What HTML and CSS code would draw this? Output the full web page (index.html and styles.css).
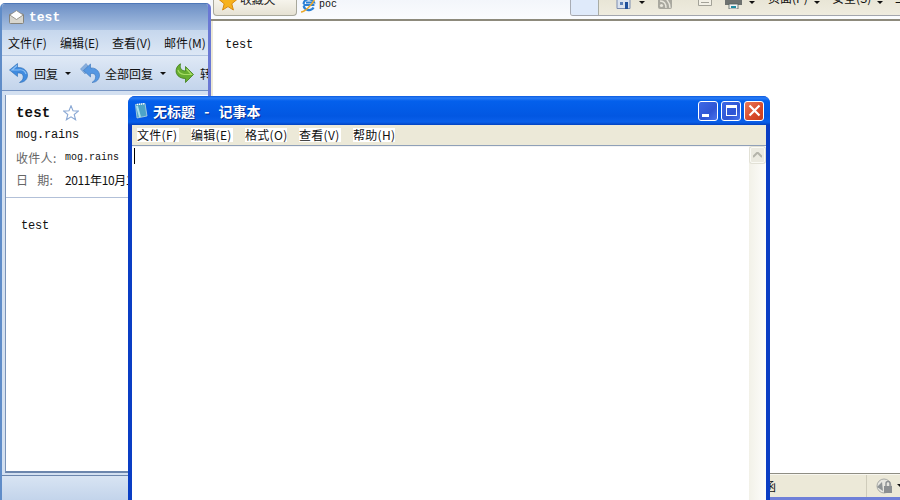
FILE: index.html
```html
<!DOCTYPE html>
<html lang="zh-CN">
<head>
    <meta charset="UTF-8">
    <title>无标题 - 记事本</title>
    <link rel="stylesheet" href="styles.css">
</head>
<body>
    <div class="desktop">
        <!-- 浏览器窗口 -->
        <div class="window browser">
            <div class="browser-top">
                <div class="tab-strip">
                    <div class="fav-tab">
                        <svg class="fav-star" width="18" height="11" viewBox="0 0 18 11"><path d="M9 -7 L11.4 -.6 L17.6 -.2 L12.8 3.8 L14.4 10 L9 6.6 L3.6 10 L5.2 3.8 L.4 -.2 L6.6 -.6 Z" fill="#f7b21c" stroke="#d98a10" stroke-width="1"/></svg>
                        <span>收藏夹</span>
                    </div>
                    <div class="page-tab">
                        <svg width="17" height="14" viewBox="0 0 17 14"><path d="M3.5 4 A5.5 5.5 0 0 1 14 2.5 H6 M3.4 5 H14.4 M13.6 7.5 A5.5 5.5 0 0 1 3.6 6" fill="none" stroke="#2a80d6" stroke-width="2.2"/><path d="M1 12 C4 12 12 6 15 -2" fill="none" stroke="#eaa92c" stroke-width="1.6"/></svg>
                        <span>poc</span>
                    </div>
                </div>
                <div class="command-bar">
                    <div class="new-tab"></div>
                    <div class="commands">
                        <svg class="cmd-icon" width="15" height="9" viewBox="0 0 15 9"><path d="M1 -2 H14 V8.5 H1 Z" fill="#dbe3ef" stroke="#7d8db0"/><path d="M9 2 H12 V9 H9 Z" fill="#20509c"/><path d="M4 2 H7 V5 H4 Z" fill="#5b7fb8"/></svg>
                        <i class="arrow arrow-home"></i>
                        <svg class="cmd-icon rss" width="14" height="9" viewBox="0 0 14 9"><rect x="0" y="-5" width="14" height="14" rx="2" fill="#a9a89f"/><circle cx="3.5" cy="5.5" r="1.6" fill="#e8e6dc"/><path d="M2 1 C6 1 8 3 8 8 M2 -3 C8 -3 12 2 12 8" fill="none" stroke="#e8e6dc" stroke-width="1.4"/></svg>
                        <svg class="cmd-icon page" width="14" height="6" viewBox="0 0 14 6"><path d="M.5 -2 H13.5 V5.5 H.5 Z" fill="#f2f0e6" stroke="#a3a298"/><path d="M3 2.5 H11" stroke="#a3a298"/></svg>
                        <svg class="cmd-icon print" width="17" height="9" viewBox="0 0 17 9"><rect x="0" y="-3" width="17" height="8" fill="#6e7270"/><rect x="4" y="4" width="9" height="5" fill="#f4f4f4" stroke="#55615f" stroke-width=".8"/><rect x="6" y="6" width="5" height="2" fill="#1f8aa0"/></svg>
                        <i class="arrow arrow-print"></i>
                        <span class="cmd-text">页面(P)</span>
                        <i class="arrow arrow-text"></i>
                        <span class="cmd-text safe">安全(S)</span>
                        <i class="arrow arrow-safe"></i>
                        <span class="cmd-text tool">工</span>
                    </div>
                </div>
            </div>
            <div class="browser-page">
                <p class="page-text">test</p>
            </div>
            <div class="status-bar">
                <span class="status-char">函</span>
                <div class="status-zone">
                    <svg width="18" height="17" viewBox="0 0 18 17"><circle cx="8" cy="8" r="7" fill="#e6e6e0" stroke="#a8aaa6"/><path d="M1 9 L6 4 L7 13 Z" fill="#8f9496"/><rect x="8" y="8" width="8" height="7" fill="#8b8f92"/><path d="M10 8 V5.5 A2 2 0 0 1 14 5.5 V8" fill="none" stroke="#8b8f92" stroke-width="1.4"/></svg>
                </div>
                <i class="arrow status-arrow"></i>
            </div>
        </div>

        <!-- 邮件窗口 -->
        <div class="window mail">
            <div class="mail-title">
                <svg width="15" height="14" viewBox="0 0 15 14"><rect x=".5" y="4" width="14" height="9.5" rx="1" fill="#d8d6ce" stroke="#85837b"/><path d="M.8 5 L7.5 .6 L14.2 5 L7.5 9.5 Z" fill="#fff" stroke="#85837b" stroke-width=".8"/></svg>
                <span>test</span>
            </div>
            <div class="mail-menu">
                <span>文件(F)</span>
                <span>编辑(E)</span>
                <span>查看(V)</span>
                <span>邮件(M)</span>
            </div>
            <div class="mail-tools">
                <svg class="tool-reply" width="19" height="20" viewBox="0 0 19 20"><path d="M8.5 .5 L.5 7 L8.5 13.5 V10 C12 9.6 14 11 14.2 13.5 C14.4 16 13 18 10.5 19.5 C16 19.5 18.8 15.5 18.5 11.5 C18 7 13.5 4 8.5 4.5 Z" fill="#3f8be0" stroke="#2c6cb4" stroke-width=".6"/><path d="M8 2.5 L3 7 H9 C13 6 16 8 17 11" fill="none" stroke="#8cc0f4" stroke-width="1.2"/></svg>
                <span class="tool-label">回复</span>
                <i class="arrow tool-arrow"></i>
                <svg class="tool-replyall" width="20" height="20" viewBox="0 0 20 20"><path d="M6 .5 L.5 6 L5 11 L6 9.5 L4 6.5 L8 3 Z" fill="#86aede" stroke="#6490c6" stroke-width=".6"/><path d="M10.5 1 L3.5 7.5 L10.5 14 V10.5 C13.5 10 15.5 11 15.6 13.5 C15.7 16 14.4 18 12 19.5 C17 19.5 19.8 15.5 19.5 11.5 C19 7.5 15 4.5 10.5 5 Z" fill="#5597e2" stroke="#3a75ba" stroke-width=".6"/></svg>
                <span class="tool-label label-all">全部回复</span>
                <i class="arrow tool-arrow"></i>
                <svg class="tool-forward" width="19" height="21" viewBox="0 0 19 21"><path d="M10.5 3.5 L18.5 11.5 L10.5 19.5 V15.5 C6.5 15.5 3 14 1.5 10.5 C.3 7 1.8 2.8 5.5 .8 C4.6 4.5 6 8 10.5 8 Z" fill="#67ad30" stroke="#3f7e1b" stroke-width=".8"/><path d="M11.5 6 L16.5 11.5 H9 C6 11 3.5 9 3 7" fill="none" stroke="#a6dc62" stroke-width="1.2"/></svg>
                <span class="tool-label">转发</span>
            </div>
            <div class="mail-body">
                <div class="mail-head">
                    <div class="subject">
                        <b>test</b>
                        <svg width="16" height="16" viewBox="0 0 16 16"><path d="M8 .8 L10 5.8 L15.4 6.1 L11.2 9.5 L12.6 14.8 L8 11.9 L3.4 14.8 L4.8 9.5 L.6 6.1 L6 5.8 Z" fill="#fff" stroke="#8aa8d4" stroke-width="1.1"/></svg>
                    </div>
                    <div class="sender">mog.rains</div>
                    <div class="meta-row"><span class="meta-label">收件人:</span><span class="meta-addr">mog.rains</span></div>
                    <div class="meta-row meta-date"><span class="meta-label">日&nbsp;&nbsp;&nbsp;期:</span><span class="meta-value">2011年10月19日</span></div>
                </div>
                <p class="mail-text">test</p>
            </div>
            <div class="mail-foot"></div>
        </div>

        <!-- 记事本 -->
        <div class="window notepad">
            <div class="np-title">
                <svg width="14" height="16" viewBox="0 0 14 16"><path d="M1.5 1.5 L11 .5 L13 13 L3 15 Z" fill="#4da3c8" stroke="#b8d4e0" stroke-width=".8"/><path d="M3 1.5 L11 .7" stroke="#ffffff" stroke-width="1.4" stroke-dasharray="1 1"/><path d="M3 3 L6 14" stroke="#a9e0ef" stroke-width="2"/></svg>
                <span class="np-name">无标题 - 记事本</span>
                <div class="np-buttons">
                    <div class="np-btn"><i class="glyph-min"></i></div>
                    <div class="np-btn"><i class="glyph-max"></i></div>
                    <div class="np-btn np-close">
                        <svg width="13" height="13" viewBox="0 0 13 13"><path d="M1.5 1.5 L11.5 11.5 M11.5 1.5 L1.5 11.5" stroke="#fff" stroke-width="2.2"/></svg>
                    </div>
                </div>
            </div>
            <div class="np-menu">
                <span>文件(F)</span>
                <span>编辑(E)</span>
                <span>格式(O)</span>
                <span>查看(V)</span>
                <span>帮助(H)</span>
            </div>
            <div class="np-edit">
                <div class="np-text"><i class="caret"></i></div>
                <div class="np-scroll">
                    <div class="np-up">
                        <svg width="9" height="6" viewBox="0 0 9 6"><path d="M0 5 L4.5 .5 L9 5" fill="none" stroke="#b4b4aa" stroke-width="2"/></svg>
                    </div>
                </div>
            </div>
        </div>
    </div>
</body>
</html>
```
FILE: styles.css
```css
* {
    box-sizing: border-box;
}

body {
    margin: 0;
    background: white;
    font-family: "Noto Sans CJK SC", "Liberation Sans", sans-serif;
    font-size: 12px;
    color: #111;
}

.desktop {
    position: relative;
    width: 900px;
    height: 500px;
    overflow: hidden;
    background: white;
}

.window {
    position: absolute;
    overflow: hidden;
}

.arrow {
    display: block;
    width: 0;
    height: 0;
    border-left: 3px solid transparent;
    border-right: 3px solid transparent;
    border-top: 3px solid #111;
}

/* 浏览器 */
.browser {
    left: 210px;
    top: 0;
    width: 690px;
    height: 500px;
    display: flex;
    flex-direction: column;
    background: #6f80d8;
}

.browser-top {
    height: 21px;
    flex: none;
    display: flex;
    padding-left: 3px;
    background: linear-gradient(#f3f6fb, #fbfcfe);
    border-bottom: 2px solid #8d8a7c;
}

.tab-strip {
    width: 357px;
    height: 15px;
    flex: none;
    display: flex;
}

.fav-tab {
    width: 84px;
    height: 16px;
    flex: none;
    display: flex;
    align-items: flex-start;
    gap: 3px;
    padding-left: 5px;
    background: linear-gradient(#f6f4ec, #e6e2d4);
    border: 1px solid #a8a89c;
    border-top: 0;
    border-radius: 0 0 4px 4px;
    color: #222;
    overflow: hidden;
}

.fav-star {
    flex: none;
}

.fav-tab span {
    margin-top: -9px;
    line-height: 16px;
    letter-spacing: -0.3px;
    white-space: nowrap;
}

.page-tab {
    display: flex;
    align-items: flex-start;
    gap: 2px;
    padding-left: 3px;
    font-family: "Liberation Mono", monospace;
    font-size: 10px;
    line-height: 9px;
}

.command-bar {
    flex: 1;
    min-width: 0;
    height: 16px;
    display: flex;
    background: linear-gradient(#e8e5d6, #efecdf);
    border-left: 1px solid #a8acb4;
    border-bottom: 1px solid #a3a6ae;
    border-bottom-left-radius: 3px;
    overflow: hidden;
}

.new-tab {
    width: 28px;
    flex: none;
    background: #dfeafa;
    border-right: 1px solid #a9aca4;
}

.commands {
    flex: 1;
    min-width: 0;
    display: flex;
    align-items: flex-start;
    padding-left: 17px;
    white-space: nowrap;
}

.commands > * {
    flex: none;
}

.arrow-home {
    margin: 1px 0 0 8px;
}

.rss {
    margin-left: 13px;
}

.page {
    margin-left: 26px;
}

.print {
    margin-left: 13px;
}

.arrow-print {
    margin: 1px 0 0 7px;
}

.cmd-text {
    margin: -10px 0 0 13px;
    width: 38px;
    line-height: 16px;
}

.arrow-text {
    margin: 1px 0 0 8px;
}

.safe {
    margin-left: 12px;
    width: 40px;
}

.arrow-safe {
    margin: 1px 0 0 5px;
}

.tool {
    margin-left: 12px;
}

.browser-page {
    flex: 1;
    padding: 17px 12px 0;
    background: white;
    border-left: 3px solid #ece9d8;
}

.page-text {
    margin: 0;
    font-family: "Liberation Mono", monospace;
    font-size: 12px;
    line-height: 14px;
    letter-spacing: -0.2px;
}

.status-bar {
    height: 24px;
    flex: none;
    display: flex;
    align-items: center;
    margin-bottom: 3px;
    background: #ece9d8;
    border-top: 1px solid #8f8e84;
    box-shadow: inset 0 1px 0 #f8f7f0;
    padding-left: 552px;
    overflow: hidden;
}

.status-char {
    width: 14px;
    flex: none;
    margin-left: 2px;
    line-height: 14px;
}

.status-zone {
    width: 31px;
    flex: none;
    margin-left: 88px;
    height: 22px;
    padding: 3px 0 0 9px;
    border-left: 1px solid #cfccbb;
}

.status-arrow {
    flex: none;
}

/* 邮件 */
.mail {
    left: 0;
    top: 3px;
    width: 211px;
    height: 497px;
    display: flex;
    flex-direction: column;
    background: #d3e0f1;
    border-left: 2px solid #5f8cc8;
    border-right: 3px solid #6a78d4;
    border-top: 1px solid #4e78b8;
    border-radius: 5px 5px 0 0;
}

.mail-title {
    height: 26px;
    flex: none;
    display: flex;
    align-items: center;
    gap: 5px;
    padding-left: 7px;
    background: linear-gradient(#6c8fc5, #a9c1e2);
    color: white;
    font-family: "Liberation Mono", monospace;
    font-weight: bold;
    font-size: 13px;
    white-space: nowrap;
}

.mail-menu {
    height: 26px;
    flex: none;
    display: flex;
    gap: 12px;
    align-items: center;
    padding-left: 6px;
    background: linear-gradient(#c6d7ed, #dce7f5);
    border-bottom: 1px solid #b0c4e0;
    white-space: nowrap;
}

.mail-menu span {
    width: 40px;
    flex: none;
}

.mail-tools {
    height: 35px;
    flex: none;
    display: flex;
    align-items: center;
    padding-left: 7px;
    background: linear-gradient(#dfe9f6, #c3d4eb);
    border-bottom: 1px solid #7593c2;
    white-space: nowrap;
}

.mail-tools > * {
    flex: none;
}

.tool-label {
    margin-left: 6px;
}

.label-all {
    margin-left: 5px;
}

.tool-arrow {
    margin-left: 7px;
}

.tool-replyall,
.tool-forward {
    margin-left: 9px;
}

.mail-body {
    flex: 1;
    min-height: 0;
    margin: 4px 0 0 3px;
    background: white;
    border-left: 1px solid #7a93b8;
    border-bottom: 2px solid #6c86ad;
    overflow: hidden;
}

.mail-head {
    height: 103px;
    padding: 8px 0 0 10px;
    border-bottom: 1px solid #b2c0d8;
    white-space: nowrap;
}

.subject {
    display: flex;
    align-items: center;
    gap: 13px;
    height: 20px;
}

.subject b {
    font-family: "Liberation Mono", monospace;
    font-size: 14px;
    letter-spacing: 0.2px;
}

.sender {
    margin-top: 5px;
    font-family: "Liberation Mono", monospace;
    font-size: 12px;
    line-height: 14px;
    letter-spacing: -0.2px;
}

.meta-row {
    display: flex;
    align-items: center;
    height: 18px;
    margin-top: 6px;
}

.meta-date {
    margin-top: 4px;
}

.meta-label {
    width: 49px;
    flex: none;
    color: #666;
    letter-spacing: 0.3px;
}

.meta-addr {
    font-family: "Liberation Mono", monospace;
    font-size: 10px;
}

.meta-value {
    letter-spacing: -0.4px;
}

.mail-text {
    margin: 21px 0 0 15px;
    font-family: "Liberation Mono", monospace;
    font-size: 12px;
    line-height: 14px;
    letter-spacing: -0.2px;
}

.mail-foot {
    height: 25px;
    flex: none;
    margin-top: 2px;
    background: linear-gradient(#d8e4f3, #c3d4eb);
    border-top: 1px solid #6c86ad;
}

/* 记事本 */
.notepad {
    left: 128px;
    top: 96px;
    width: 642px;
    height: 404px;
    display: flex;
    flex-direction: column;
    background: #0a3ec4;
    border-radius: 7px 7px 0 0;
    padding: 0 4px;
}

.np-title {
    height: 29px;
    flex: none;
    margin: 0 -4px;
    padding: 0 6px;
    display: flex;
    align-items: center;
    background: linear-gradient(#0a5ae0 0, #2a7cf5 2px, #0460ec 5px, #0257e2 20px, #0a60ea 26px, #0242c0 29px);
    color: white;
}

.np-name {
    margin-left: 5px;
    font-weight: bold;
    font-size: 14px;
    word-spacing: 6px;
    white-space: pre;
    text-shadow: 1px 1px 0 #0a2d90;
}

.np-buttons {
    margin-left: auto;
    display: flex;
    gap: 3px;
}

.np-btn {
    width: 20px;
    height: 20px;
    display: flex;
    align-items: center;
    justify-content: center;
    background: linear-gradient(135deg, #3e68e6, #2f55d4 60%, #4a74ec);
    border: 1px solid white;
    border-radius: 3px;
}

.glyph-min {
    display: block;
    width: 7px;
    height: 3px;
    background: white;
    margin: 9px 5px 0 0;
}

.glyph-max {
    display: block;
    width: 11px;
    height: 11px;
    border: 1px solid white;
    border-top-width: 3px;
}

.np-close {
    background: linear-gradient(135deg, #e8795a, #d8492a 60%, #c73c1c);
}

.np-menu {
    height: 20px;
    flex: none;
    display: flex;
    align-items: flex-start;
    gap: 12px;
    padding: 3px 0 0 5px;
    background: #ece9d8;
    white-space: nowrap;
}

.np-menu span {
    width: 42px;
    height: 14px;
    flex: none;
    line-height: 14px;
    letter-spacing: 0.3px;
    background: white;
}

.np-edit {
    flex: 1;
    min-height: 0;
    display: flex;
    background: white;
    border-top: 1px solid #8fa0b8;
    box-shadow: inset 0 1px 0 #f4f4f4;
}

.np-text {
    flex: 1;
    padding: 2px 0 0 2px;
}

.caret {
    display: block;
    width: 1px;
    height: 16px;
    background: black;
}

.np-scroll {
    width: 17px;
    flex: none;
    padding: 1px 2px 0 1px;
    background: linear-gradient(90deg, #f2f1e8, #fdfdfb);
}

.np-up {
    width: 15px;
    height: 16px;
    display: flex;
    align-items: center;
    justify-content: center;
    background: #ebeae0;
    border: 1px solid #fafaf4;
    border-radius: 2px;
    box-shadow: 0 0 0 1px #e2e1d6;
}
```
